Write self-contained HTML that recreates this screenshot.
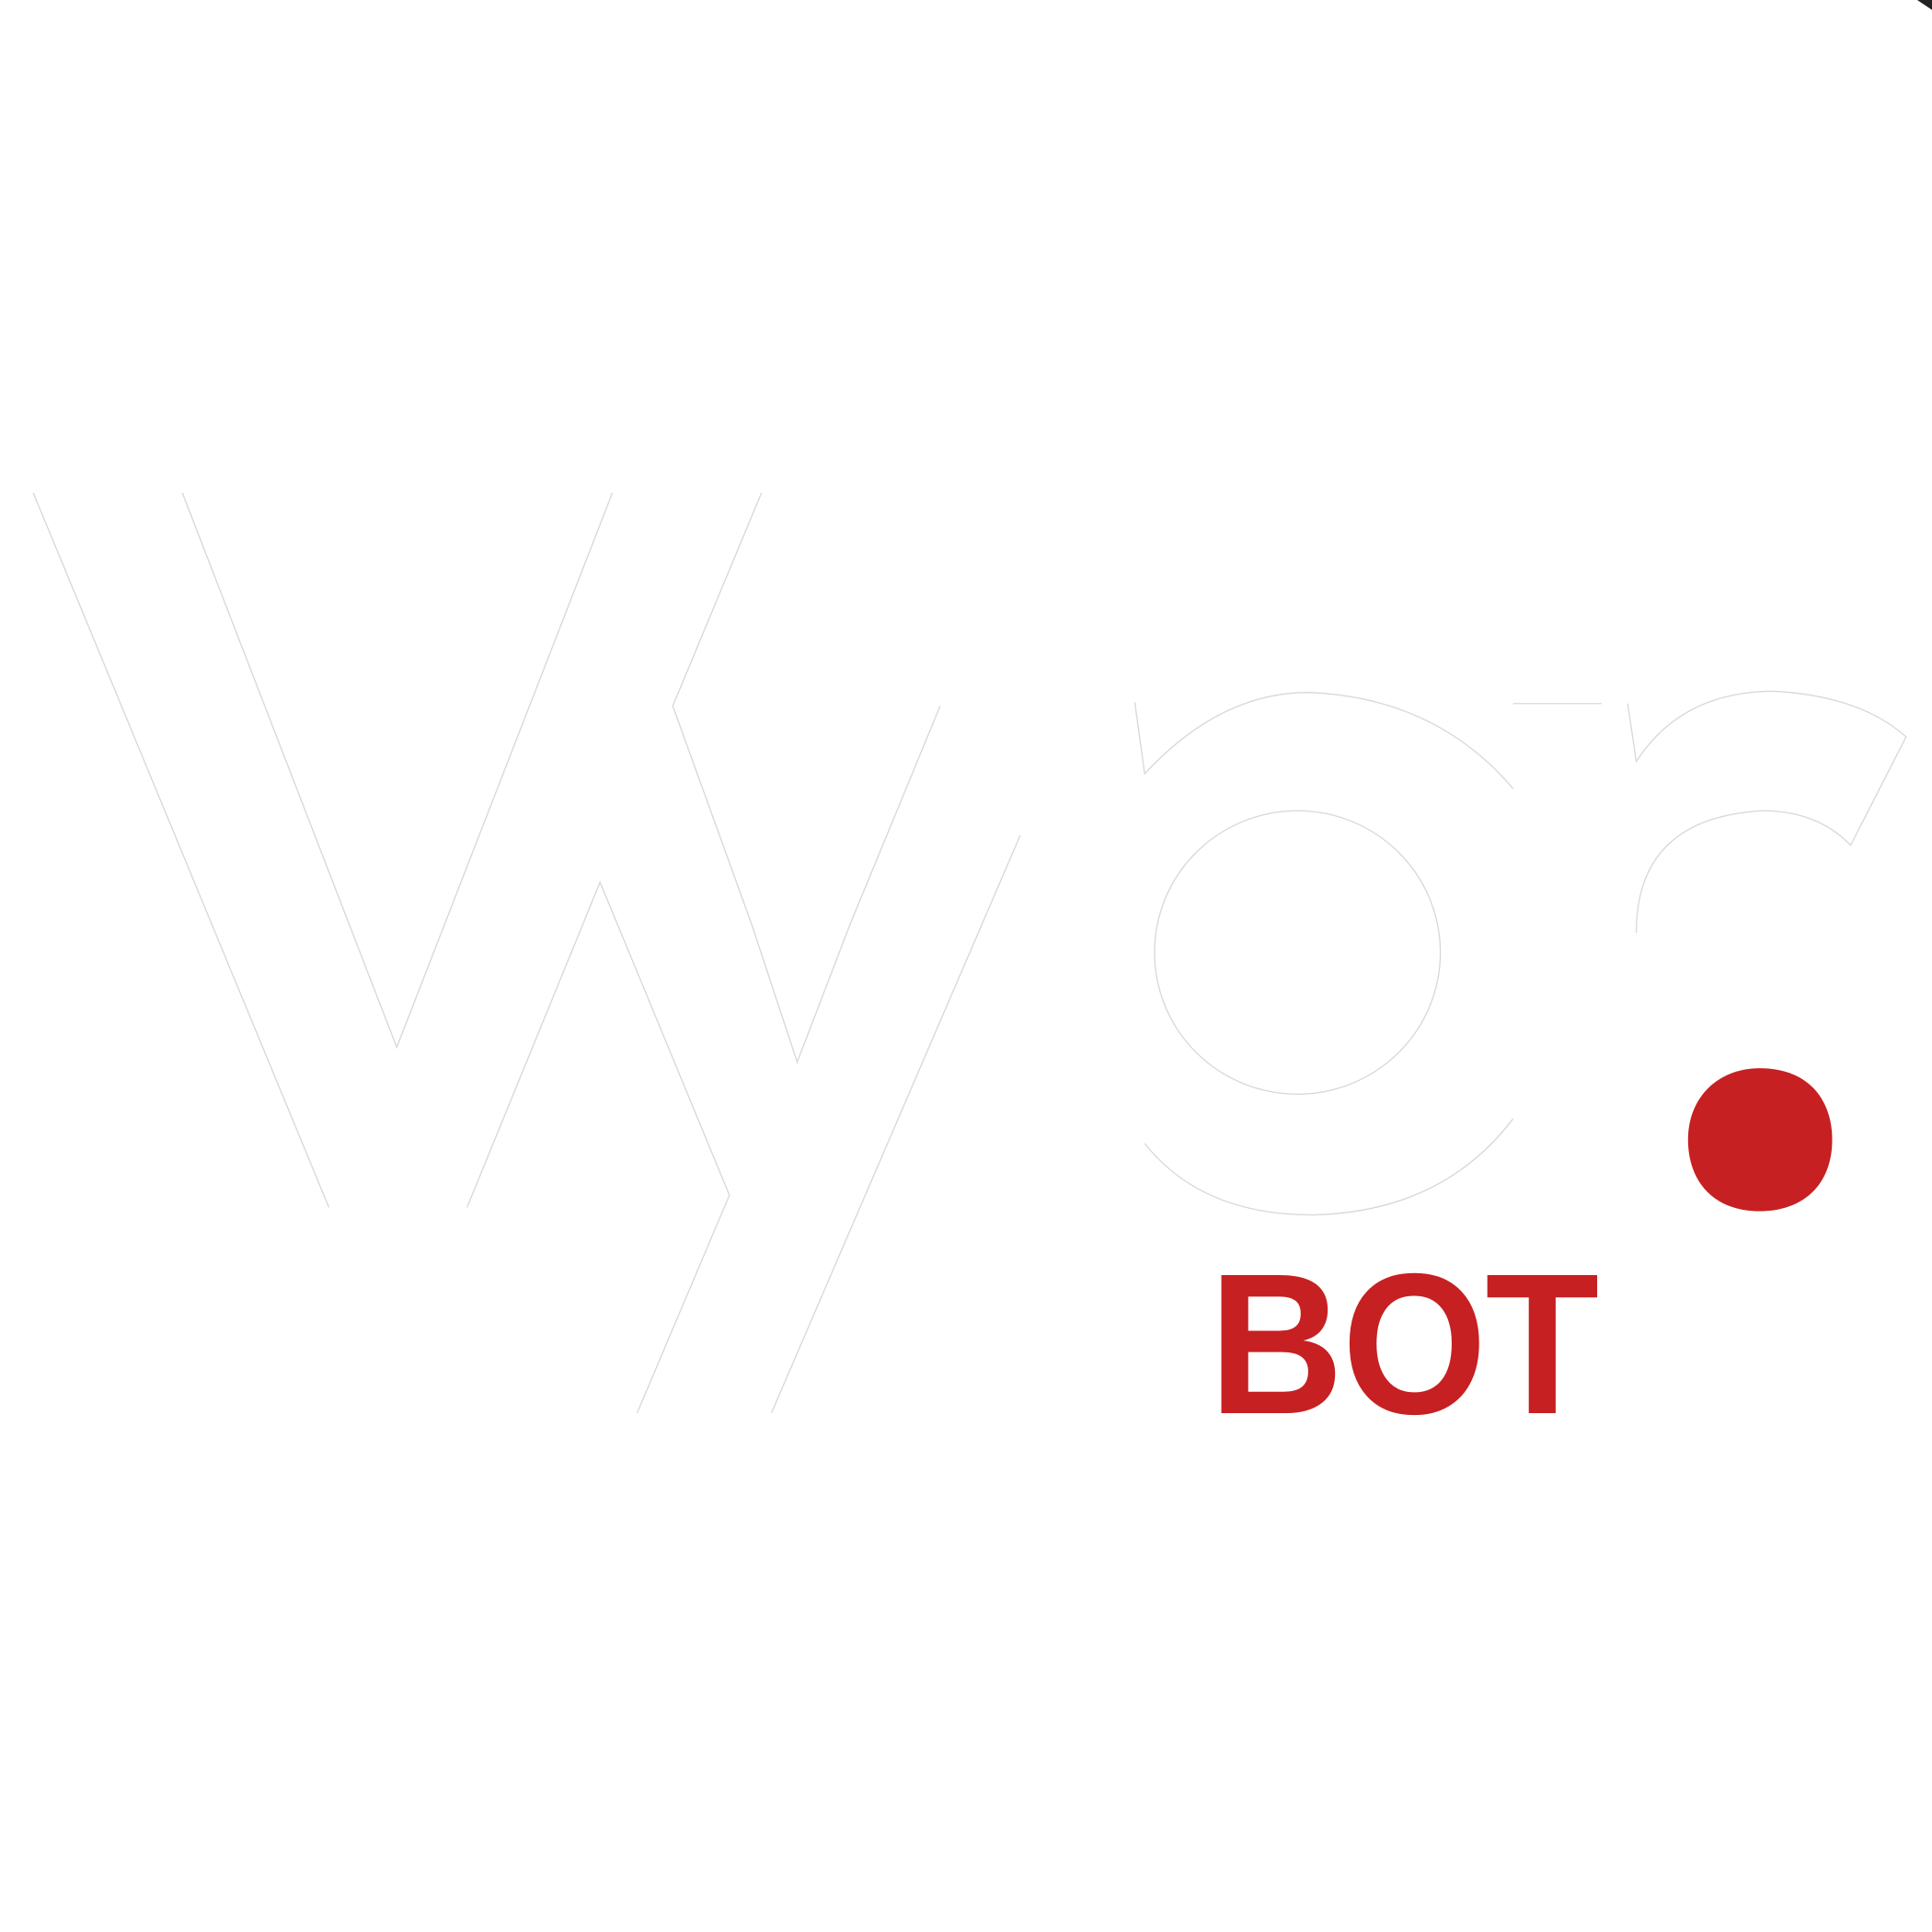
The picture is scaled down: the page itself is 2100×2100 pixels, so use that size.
<!DOCTYPE html>
<html><head><meta charset="utf-8"><style>
html,body{margin:0;padding:0;background:#fff;width:2100px;height:2100px;overflow:hidden}
svg{position:absolute;left:0;top:0}
.bot{position:absolute;left:1314px;top:1353px;font-family:"Liberation Sans",sans-serif;font-weight:bold;font-size:218px;line-height:218px;color:#c62022;transform:scaleX(0.93);transform-origin:left top;letter-spacing:-2px}
</style></head><body>
<svg width="2100" height="2100" viewBox="0 0 1568 1568">
<g fill="none" stroke="#d8d8d8" stroke-width="1">
<path d="M27 400 L267 980"/>
<path d="M148 400 L322 850 L497 400"/>
<path d="M379 980 L487 716 L592 970 L517 1147"/>
<path d="M618 400 L546 573 L610 750 L647 862 L690 750 L763 573"/>
<path d="M828 678 L626 1147"/>
<path d="M921 570 L929 628 Q990 562 1062 562 Q1165 566 1228 640"/>
<ellipse cx="1053" cy="773" rx="116" ry="115"/>
<path d="M929 928 Q975 986 1065 986 Q1170 984 1228 908"/>
<path d="M1228 571 L1300 571"/>
<path d="M1321 571 L1328 618 Q1365 561 1440 561 Q1510 565 1547 598 L1502 686 Q1475 658 1430 658 Q1328 664 1328 757"/>
</g>
<path d="M1428 867 C1470 867 1487 895 1487 925 C1487 960 1465 983 1428 983 C1390 983 1370 958 1370 925 C1370 890 1395 867 1428 867 Z" fill="#c62022"/>
<path d="M1556 0 L1568 0 L1568 8 Z" fill="#222"/>
</svg>
<div class="bot">BOT</div>
</body></html>
